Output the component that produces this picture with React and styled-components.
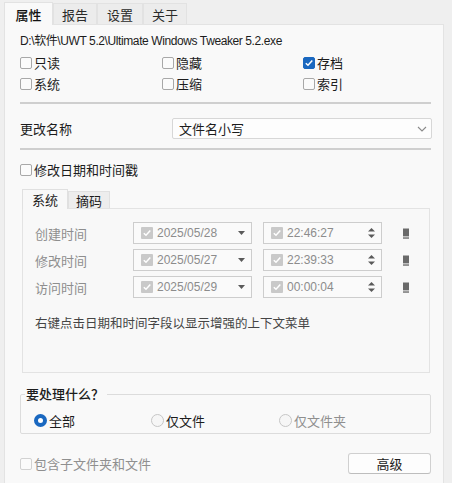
import React from "react";
import styled, { createGlobalStyle } from "styled-components";

const Global = createGlobalStyle`
  html, body { margin: 0; padding: 0; background: #f0f0f0; }
  body { font-family: "Noto Sans", "Noto Sans CJK SC", sans-serif; }
`;

const Window = styled.div`
  width: 452px;
  height: 483px;
  box-sizing: border-box;
  padding: 0 8px 0 4px;
  background: #efefef;
  display: flex;
  flex-direction: column;
  font-family: "Noto Sans", "Noto Sans CJK SC", sans-serif;
  color: #1c1c1c;
  overflow: hidden;
`;

const TabStrip = styled.div`
  display: flex;
  height: 24px;
  padding-top: 2px;
  box-sizing: border-box;
  align-items: flex-end;
`;

const Tab = styled.div`
  height: ${(p) => (p.$active ? "23px" : "21px")};
  width: ${(p) => p.$w}px;
  box-sizing: border-box;
  display: flex;
  align-items: center;
  justify-content: center;
  font-size: 13px;
  font-family: "Noto Sans CJK SC", sans-serif;
  color: ${(p) => (p.$active ? "#111" : "#2a2a2a")};
  font-weight: ${(p) => (p.$active ? 500 : 400)};
  background: ${(p) => (p.$active ? "#f9f9f9" : "#ececec")};
  border: 1px solid #e2e2e2;
  border-bottom: none;
  margin-bottom: ${(p) => (p.$active ? "-1px" : "0")};
  position: relative;
  z-index: ${(p) => (p.$active ? 2 : 1)};
`;

const Panel = styled.div`
  flex: 1;
  background: #f9f9f9;
  border: 1px solid #e3e3e3;
  border-bottom: none;
  padding: 6px 10px 0 15px;
  display: flex;
  flex-direction: column;
`;

const PathText = styled.div`
  font-size: 12px;
  line-height: 20px;
  height: 20px;
  color: #1c1c1c;
  letter-spacing: -0.4px;
  font-family: "Liberation Sans", "Noto Sans CJK SC", sans-serif;
`;

const CheckGrid = styled.div`
  display: grid;
  grid-template-columns: 142px 141px 1fr;
  grid-auto-rows: 21px;
  margin-top: 1px;
`;

const CheckLabel = styled.label`
  display: flex;
  align-items: center;
  gap: 2px;
  font-size: 13px;
  font-family: "Noto Sans CJK SC", sans-serif;
  color: ${(p) => (p.$disabled ? "#8f8f8f" : "#1c1c1c")};
`;

const Box = styled.span`
  width: 12px;
  height: 12px;
  box-sizing: border-box;
  border-radius: 2px;
  border: 1px solid ${(p) => (p.$checked ? "#1a68c0" : p.$disabled ? "#d2d2d2" : "#a8a8a8")};
  background: ${(p) => (p.$checked ? "#1a68c0" : "#fbfbfb")};
  display: inline-flex;
  align-items: center;
  justify-content: center;
  flex-shrink: 0;
`;

const GrayBox = styled.span`
  width: 12px;
  height: 12px;
  border-radius: 1px;
  background: #c9c9c9;
  display: inline-flex;
  align-items: center;
  justify-content: center;
  flex-shrink: 0;
`;

const Check = ({ color = "#fff" }) => (
  <svg width="10" height="10" viewBox="0 0 10 10">
    <path d="M1.8 5.2 L4 7.3 L8.3 2.6" fill="none" stroke={color} strokeWidth="1.5" />
  </svg>
);

const Checkbox = ({ label, checked, disabled }) => (
  <CheckLabel $disabled={disabled}>
    <Box $checked={checked} $disabled={disabled}>{checked && <Check />}</Box>
    {label}
  </CheckLabel>
);

const Separator = styled.div`
  height: 2px;
  background: #cfcfcf;
  margin: ${(p) => p.$m};
  margin-right: 2px;
`;

const RenameRow = styled.div`
  display: flex;
  align-items: center;
  margin-top: 14px;
  height: 21px;
`;

const RowLabel = styled.div`
  width: 152px;
  font-size: 13px;
  font-family: "Noto Sans CJK SC", sans-serif;
  color: #1c1c1c;
`;

const Select = styled.div`
  width: 260px;
  height: 21px;
  box-sizing: border-box;
  border: 1px solid #d7d7d7;
  border-radius: 2px;
  background: #fdfdfd;
  display: flex;
  align-items: center;
  justify-content: space-between;
  padding: 0 4px 0 6px;
  font-size: 13px;
  font-family: "Noto Sans CJK SC", sans-serif;
`;

const ModifyRow = styled.div`
  margin-top: 9px;
  height: 21px;
  display: flex;
  align-items: center;
`;

const InnerTabs = styled.div`
  display: flex;
  align-items: flex-end;
  margin: 8px 0 0 2px;
  height: 20px;
`;

const InnerTab = styled.div`
  width: ${(p) => p.$w}px;
  height: ${(p) => (p.$active ? "20px" : "17px")};
  box-sizing: border-box;
  border: 1px solid #e0e0e0;
  border-bottom: none;
  background: ${(p) => (p.$active ? "#f8f8f8" : "#ededed")};
  display: flex;
  align-items: center;
  justify-content: center;
  font-size: 13px;
  font-family: "Noto Sans CJK SC", sans-serif;
  color: #1c1c1c;
  margin-bottom: ${(p) => (p.$active ? "-1px" : "0")};
  position: relative;
  z-index: ${(p) => (p.$active ? 2 : 1)};
`;

const InnerPanel = styled.div`
  margin: 0 0 0 2px;
  width: 408px;
  height: 165px;
  box-sizing: border-box;
  border: 1px solid #e3e3e3;
  background: #f8f8f8;
  padding: 13px 0 0 12px;
  display: flex;
  flex-direction: column;
  gap: 5px;
`;

const TimeRow = styled.div`
  display: grid;
  grid-template-columns: 98px 119px 11px 119px 20px 8px;
  height: 22px;
  align-items: center;
`;

const DimLabel = styled.div`
  font-size: 13px;
  font-family: "Noto Sans CJK SC", sans-serif;
  color: #8e8e8e;
`;

const Field = styled.div`
  grid-column: ${(p) => p.$col};
  height: 22px;
  box-sizing: border-box;
  border: 1px solid #cdcdcd;
  background: #fafafa;
  display: flex;
  align-items: center;
  padding: 0 6px 0 7px;
  gap: 4px;
`;

const FieldText = styled.span`
  flex: 1;
  font-size: 12px;
  color: #8c8c8c;
  font-family: "Liberation Sans", sans-serif;
`;

const Note = styled.div`
  margin-top: 10px;
  font-size: 12.5px;
  font-family: "Noto Sans CJK SC", sans-serif;
  color: #454545;
`;

const Group = styled.div`
  position: relative;
  margin: 21px 2px 0 0;
  padding: 17px 0 0 13px;
  height: 40px;
  box-sizing: border-box;
  border: 1px solid #dcdcdc;
  border-radius: 2px;
  display: flex;
  align-items: flex-start;
`;

const Legend = styled.div`
  position: absolute;
  top: -10px;
  left: 4px;
  padding: 0 3px 0 1px;
  background: #f9f9f9;
  font-size: 13px;
  line-height: 18px;
  font-family: "Noto Sans CJK SC", sans-serif;
  font-weight: 500;
  color: #1c1c1c;
`;

const RadioItem = styled.label`
  width: ${(p) => p.$w}px;
  height: 16px;
  display: flex;
  align-items: center;
  gap: 2px;
  font-size: 13px;
  font-family: "Noto Sans CJK SC", sans-serif;
  color: ${(p) => (p.$disabled ? "#8f8f8f" : "#1c1c1c")};
`;

const RadioDot = styled.span`
  width: 13px;
  height: 13px;
  box-sizing: border-box;
  border-radius: 50%;
  border: ${(p) => (p.$checked ? "4px solid #1a68c0" : "1px solid #c6c6c6")};
  background: ${(p) => (p.$checked ? "#fff" : "#f6f6f6")};
  flex-shrink: 0;
`;

const BottomRow = styled.div`
  display: flex;
  align-items: center;
  justify-content: space-between;
  margin: 19px 2px 0 0;
`;

const Button = styled.button`
  width: 83px;
  height: 21px;
  box-sizing: border-box;
  border: 1px solid #d0d0d0;
  border-bottom-color: #bdbdbd;
  border-radius: 3px;
  background: #fdfdfd;
  font-size: 13px;
  font-family: "Noto Sans CJK SC", sans-serif;
  color: #1c1c1c;
  padding: 0;
`;

const Chevron = () => (
  <svg width="10" height="6" viewBox="0 0 10 6">
    <path d="M1 1 L5 5 L9 1" fill="none" stroke="#8a8a8a" strokeWidth="1.1" />
  </svg>
);

const Caret = () => (
  <svg width="7" height="4" viewBox="0 0 7 4">
    <path d="M0 0 L7 0 L3.5 4 Z" fill="#5a5a5a" />
  </svg>
);

const Spin = () => (
  <svg width="7" height="12" viewBox="0 0 7 12">
    <path d="M0 4.5 L3.5 1 L7 4.5 Z" fill="#5a5a5a" />
    <path d="M0 7.5 L3.5 11 L7 7.5 Z" fill="#5a5a5a" />
  </svg>
);

const StoreIcon = () => (
  <svg width="8" height="11" viewBox="0 0 8 11" style={{ gridColumn: 6 }}>
    <rect x="1" y="0.5" width="6" height="8" fill="#6a6a6a" />
    <rect x="1" y="8.5" width="6" height="0.8" fill="#d0d0d0" />
    <rect x="1" y="9.3" width="6" height="1.5" fill="#7a7a7a" />
  </svg>
);

const rows = [
  ["创建时间", "2025/05/28", "22:46:27"],
  ["修改时间", "2025/05/27", "22:39:33"],
  ["访问时间", "2025/05/29", "00:00:04"],
];

export default function App() {
  return (
    <>
      <Global />
      <Window>
        <TabStrip>
          <Tab $active $w={49}>属性</Tab>
          <Tab $w={44}>报告</Tab>
          <Tab $w={46}>设置</Tab>
          <Tab $w={44}>关于</Tab>
        </TabStrip>
        <Panel>
          <PathText>D:\软件\UWT 5.2\Ultimate Windows Tweaker 5.2.exe</PathText>
          <CheckGrid>
            <Checkbox label="只读" />
            <Checkbox label="隐藏" />
            <Checkbox label="存档" checked />
            <Checkbox label="系统" />
            <Checkbox label="压缩" />
            <Checkbox label="索引" />
          </CheckGrid>
          <Separator $m="8px 0 0 0" />
          <RenameRow>
            <RowLabel>更改名称</RowLabel>
            <Select>
              文件名小写
              <Chevron />
            </Select>
          </RenameRow>
          <Separator $m="9px 0 0 0" />
          <ModifyRow>
            <Checkbox label="修改日期和时间戳" />
          </ModifyRow>
          <InnerTabs>
            <InnerTab $active $w={46}>系统</InnerTab>
            <InnerTab $w={42}>摘码</InnerTab>
          </InnerTabs>
          <InnerPanel>
            {rows.map(([l, d, t]) => (
              <TimeRow key={l}>
                <DimLabel>{l}</DimLabel>
                <Field $col={2}>
                  <GrayBox><Check /></GrayBox>
                  <FieldText>{d}</FieldText>
                  <Caret />
                </Field>
                <Field $col={4}>
                  <GrayBox><Check /></GrayBox>
                  <FieldText>{t}</FieldText>
                  <Spin />
                </Field>
                <StoreIcon />
              </TimeRow>
            ))}
            <Note>右键点击日期和时间字段以显示增强的上下文菜单</Note>
          </InnerPanel>
          <Group>
            <Legend>要处理什么？</Legend>
            <RadioItem $w={117}><RadioDot $checked />全部</RadioItem>
            <RadioItem $w={128}><RadioDot />仅文件</RadioItem>
            <RadioItem $w={100} $disabled><RadioDot />仅文件夹</RadioItem>
          </Group>
          <BottomRow>
            <Checkbox label="包含子文件夹和文件" disabled />
            <Button>高级</Button>
          </BottomRow>
        </Panel>
      </Window>
    </>
  );
}
